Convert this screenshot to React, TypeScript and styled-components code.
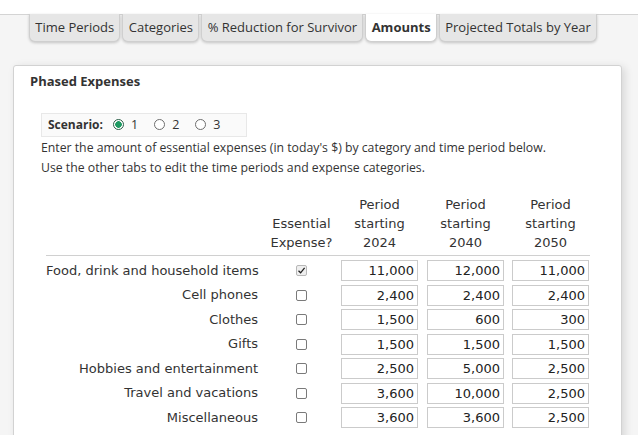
import React from "react";
import styled, { createGlobalStyle } from "styled-components";

const Global = createGlobalStyle`
  html, body { margin: 0; padding: 0; background: #fff; }
  body { font-family: "Open Sans", "Noto Sans", sans-serif; color: #333; }
`;

const Page = styled.div`
  padding-top: 14px;
  background: #fff;
  width: 638px;
  height: 435px;
  overflow: hidden;
  box-sizing: border-box;
`;

const Main = styled.div`
  background: #f5f5f5;
  border-top: 1px solid #d4d4d4;
  height: 100%;
`;

const TabBar = styled.div`
  display: flex;
  gap: 2px;
  padding-left: 29px;
  margin-top: -1px;
`;

const Tab = styled.div<{ $active?: boolean }>`
  height: 27px;
  line-height: 27px;
  padding: 0 5.3px;
  font-size: 13px;
  font-weight: ${(p) => (p.$active ? 700 : 400)};
  background: ${(p) => (p.$active ? "#fff" : "#e6e6e6")};
  border: 1px solid #cfcfcf;
  border-top: none;
  border-radius: 0 0 6px 6px;
  box-shadow: 0 1px 3px rgba(0, 0, 0, 0.2);
  color: #333;
  white-space: nowrap;
`;

const Panel = styled.div`
  margin: 23px 16px 0 13px;
  background: #fff;
  border: 1px solid #d2d2d2;
  border-radius: 3px;
  box-shadow: 3px 2px 8px rgba(0, 0, 0, 0.12);
  padding: 5px 0 0 16px;
  height: 400px;
`;

const Title = styled.div`
  font-size: 13px;
  font-weight: 700;
  line-height: 20px;
  color: #333;
`;

const Content = styled.div`
  padding-left: 11px;
  margin-top: 21px;
`;

const ScenarioBox = styled.div`
  display: inline-flex;
  align-items: center;
  width: 206px;
  height: 24px;
  box-sizing: border-box;
  background: #fafafa;
  border: 1px solid #e8e8e8;
  padding-left: 6px;
  font-size: 12px;
`;

const ScenarioLabel = styled.span`
  font-weight: 700;
  margin-right: 10px;
`;

const RadioItem = styled.label`
  display: inline-flex;
  align-items: center;
  gap: 7px;
  margin-right: 16px;
  font-size: 12.5px;
`;

const RadioDot = styled.span<{ $checked?: boolean }>`
  width: 11px;
  height: 11px;
  border-radius: 50%;
  box-sizing: border-box;
  border: 1px solid ${(p) => (p.$checked ? "#2b5f48" : "#6e6e6e")};
  background: ${(p) =>
    p.$checked ? "radial-gradient(circle, #1e9a62 0 3px, #fff 3.6px)" : "#fff"};
`;

const Instructions = styled.div`
  font-size: 12.25px;
  line-height: 20px;
  margin-top: 1px;
`;

const Grid = styled.div`
  display: grid;
  grid-template-columns: 216px 79px 86px 85px 78px;
  grid-template-rows: auto;
  grid-auto-rows: 24.5px;
  margin-top: 14px;
  margin-left: 16px;
  font-family: "DejaVu Sans", Verdana, sans-serif;
  font-size: 13px;
  color: #333;
`;

const HeadCell = styled.div`
  align-self: end;
  line-height: 19px;
  padding-bottom: 3px;
  margin-bottom: 3px;
  border-bottom: 1px solid #d0d0d0;
  height: 60px;
  display: flex;
  align-items: flex-end;
`;

const HeadInner = styled.div<{ $w?: number }>`
  width: ${(p) => (p.$w ? `${p.$w}px` : "100%")};
  text-align: center;
`;

const RowLabel = styled.div`
  text-align: right;
  padding-right: 4px;
  line-height: 24.5px;
  white-space: nowrap;
`;

const CheckCell = styled.div`
  display: flex;
  justify-content: center;
  align-items: center;
`;

const Check = styled.span<{ $checked?: boolean }>`
  width: 11px;
  height: 11px;
  box-sizing: border-box;
  border: 1px solid ${(p) => (p.$checked ? "#b8b8b8" : "#7a7a7a")};
  border-radius: 2px;
  background: ${(p) => (p.$checked ? "#efefef" : "#fff")};
  display: flex;
  align-items: center;
  justify-content: center;
`;

const InputCell = styled.div`
  display: flex;
  align-items: center;
`;

const Amount = styled.div`
  width: 77px;
  height: 21px;
  box-sizing: border-box;
  border: 1px solid #cbcbcb;
  text-align: right;
  padding-right: 3px;
  line-height: 19px;
  font-size: 13px;
  color: #222;
`;

const rows: { label: string; essential: boolean; v: string[] }[] = [
  { label: "Food, drink and household items", essential: true, v: ["11,000", "12,000", "11,000"] },
  { label: "Cell phones", essential: false, v: ["2,400", "2,400", "2,400"] },
  { label: "Clothes", essential: false, v: ["1,500", "600", "300"] },
  { label: "Gifts", essential: false, v: ["1,500", "1,500", "1,500"] },
  { label: "Hobbies and entertainment", essential: false, v: ["2,500", "5,000", "2,500"] },
  { label: "Travel and vacations", essential: false, v: ["3,600", "10,000", "2,500"] },
  { label: "Miscellaneous", essential: false, v: ["3,600", "3,600", "2,500"] },
];

const tabs = ["Time Periods", "Categories", "% Reduction for Survivor", "Amounts", "Projected Totals by Year"];

export default function App() {
  return (
    <Page>
      <Global />
      <Main>
        <TabBar>
          {tabs.map((t) => (
            <Tab key={t} $active={t === "Amounts"}>{t}</Tab>
          ))}
        </TabBar>
        <Panel>
          <Title>Phased Expenses</Title>
          <Content>
            <ScenarioBox>
              <ScenarioLabel>Scenario:</ScenarioLabel>
              <RadioItem><RadioDot $checked />1</RadioItem>
              <RadioItem><RadioDot />2</RadioItem>
              <RadioItem><RadioDot />3</RadioItem>
            </ScenarioBox>
            <Instructions>
              Enter the amount of essential expenses (in today's $) by category and time period below.
              <br />
              Use the other tabs to edit the time periods and expense categories.
            </Instructions>
          </Content>
          <Grid>
            <HeadCell />
            <HeadCell>
              <HeadInner>Essential<br />Expense?</HeadInner>
            </HeadCell>
            {["2024", "2040", "2050"].map((y) => (
              <HeadCell key={y}>
                <HeadInner $w={77}>Period<br />starting<br />{y}</HeadInner>
              </HeadCell>
            ))}
            {rows.map((r) => (
              <React.Fragment key={r.label}>
                <RowLabel>{r.label}</RowLabel>
                <CheckCell>
                  <Check $checked={r.essential}>
                    {r.essential && (
                      <svg width="9" height="9" viewBox="0 0 9 9">
                        <path d="M1.5 4.8 L3.6 6.8 L7.6 1.8" fill="none" stroke="#222" strokeWidth="1.3" />
                      </svg>
                    )}
                  </Check>
                </CheckCell>
                {r.v.map((v, i) => (
                  <InputCell key={i}><Amount>{v}</Amount></InputCell>
                ))}
              </React.Fragment>
            ))}
          </Grid>
        </Panel>
      </Main>
    </Page>
  );
}
